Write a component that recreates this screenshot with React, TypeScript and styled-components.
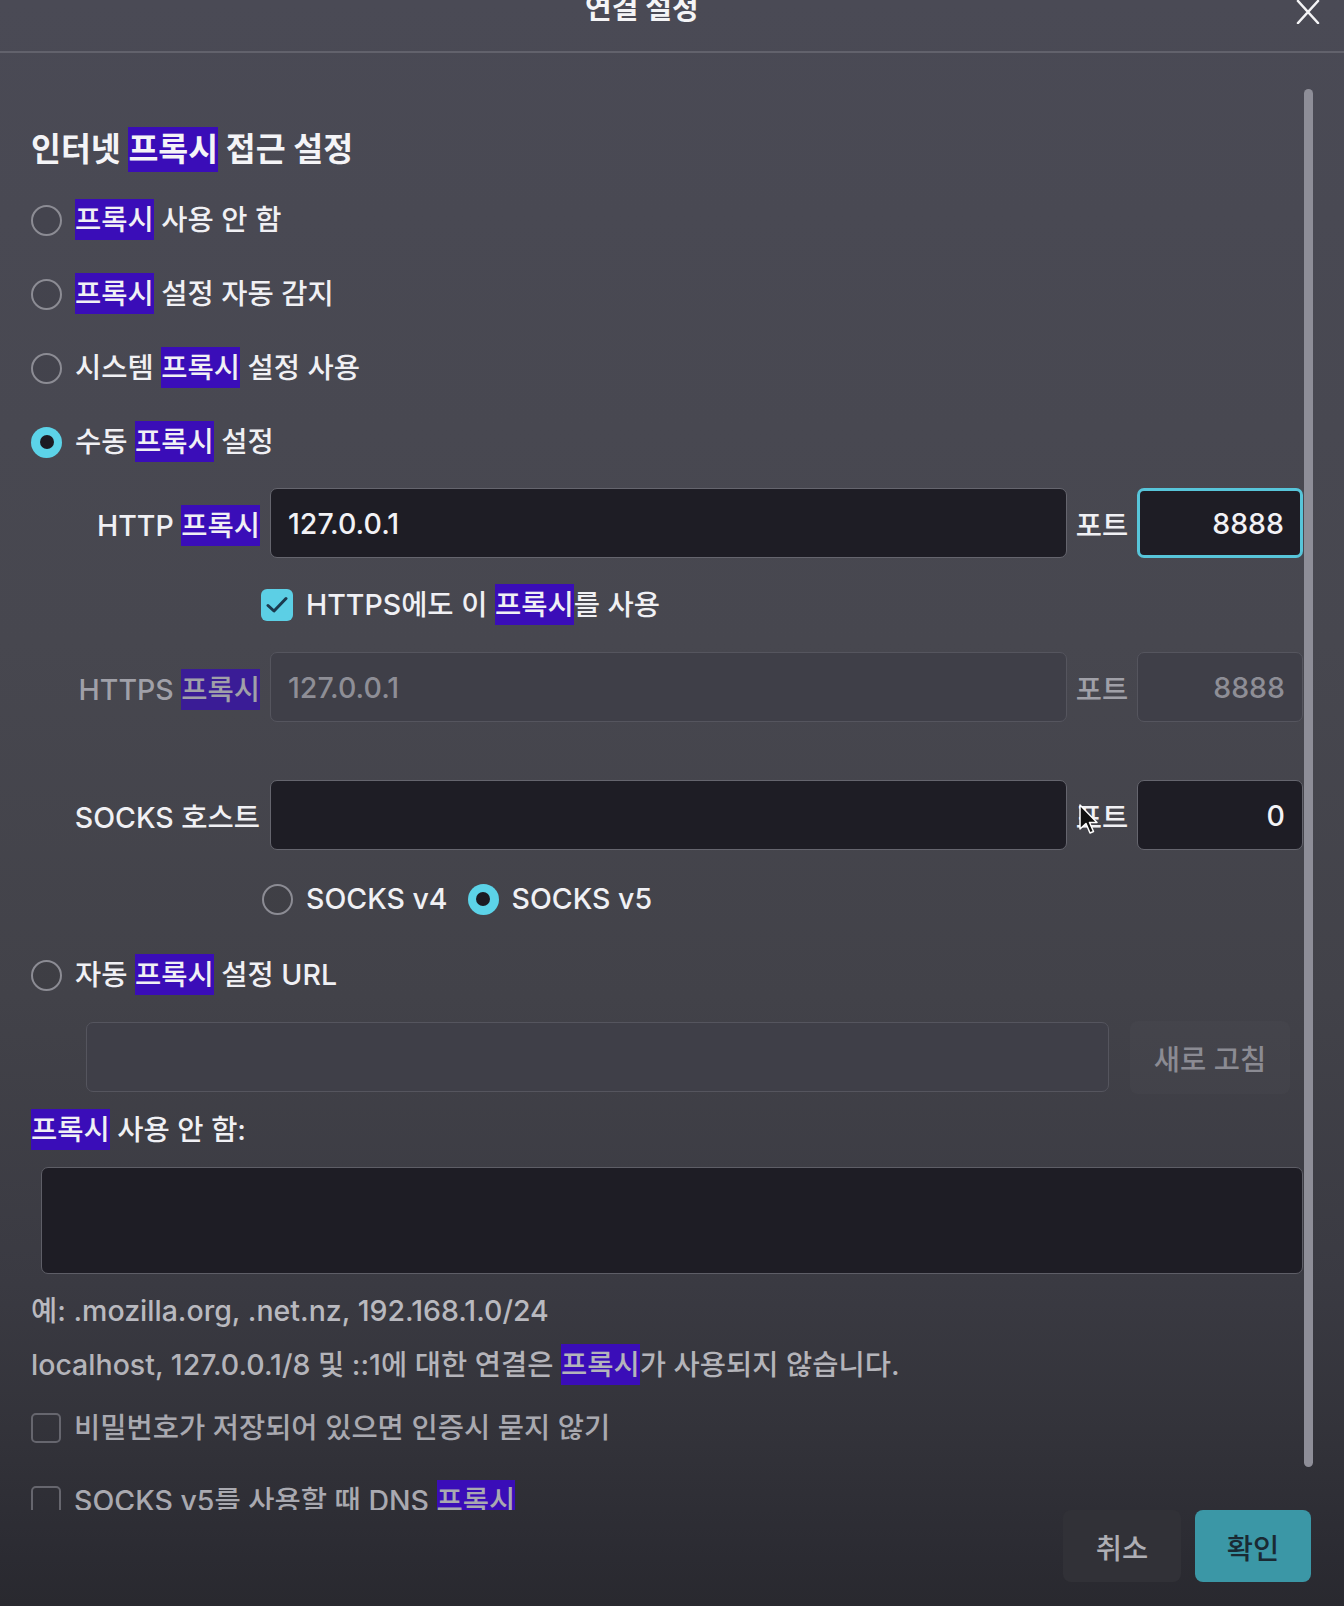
import React from 'react';
import styled, { createGlobalStyle, css } from 'styled-components';

const GlobalStyle = createGlobalStyle`
  html, body { margin: 0; padding: 0; background: #29292f; }
  body {
    font-family: Inter, "Noto Sans CJK KR", sans-serif;
    -webkit-font-smoothing: antialiased;
  }
  * { box-sizing: border-box; }
`;

const Dialog = styled.div`
  position: relative;
  width: 1344px;
  height: 1606px;
  display: flex;
  flex-direction: column;
  overflow: hidden;
  color: #f0f0f4;
  font-size: 28.5px;
  font-weight: 500;
  background: linear-gradient(
    180deg,
    #4a4a55 0%,
    #47474f 40%,
    #424249 62%,
    #3a3a42 80%,
    #33333a 89%,
    #2b2b32 97%,
    #29292f 100%
  );
`;

const Header = styled.header`
  flex: none;
  height: 53px;
  display: flex;
  align-items: flex-start;
  padding-right: 24px;
  border-bottom: 2px solid #62626c;
`;

const Title = styled.h1`
  margin: -6px 0 0 585px;
  font-size: 29px;
  line-height: 29px;
  font-weight: 700;
  color: #f4f4f6;
`;

const CloseButton = styled.button`
  margin-left: auto;
  width: 24px;
  height: 24px;
  padding: 0;
  border: 0;
  background: none;
  color: #f4f4f6;
  display: flex;
`;

const Body = styled.div`
  flex: 1;
  min-height: 0;
  display: flex;
`;

const Content = styled.div`
  flex: 1;
  min-width: 0;
  overflow: hidden;
  padding: 77px 0 0 31px;
`;

const ScrollTrack = styled.div`
  flex: none;
  width: 9px;
  margin: 0 31px 0 1px;
  padding: 36px 0 43px;
  display: flex;
`;

const ScrollThumb = styled.div`
  flex: 1;
  border-radius: 5px;
  background: #8e8e98;
`;

const Heading = styled.h2`
  margin: 0 0 28px;
  font-size: 32.5px;
  line-height: 40px;
  font-weight: 700;
  color: #f4f4f7;
`;

const Hl = styled.span<{ $muted?: boolean }>`
  background: ${(p) => (p.$muted ? '#3a1c96' : '#3a0db8')};
  padding: 3px 0;
`;

const RadioList = styled.div`
  display: flex;
  flex-direction: column;
  gap: 30px;
`;

const OptionRow = styled.label<{ $mt?: number; $indent?: number; $dim?: boolean }>`
  height: 44px;
  display: flex;
  align-items: center;
  gap: 13px;
  margin-top: ${(p) => p.$mt ?? 0}px;
  padding-left: ${(p) => p.$indent ?? 0}px;
  line-height: 44px;
  white-space: nowrap;
  color: ${(p) => (p.$dim ? '#a9a9b0' : 'inherit')};
`;

const Radio = styled.span<{ $checked?: boolean; $gapBefore?: number }>`
  flex: none;
  width: 31px;
  height: 31px;
  border-radius: 50%;
  display: flex;
  align-items: center;
  justify-content: center;
  margin-left: ${(p) => p.$gapBefore ?? 0}px;
  ${(p) =>
    p.$checked
      ? css`
          background: #5cd3e8;
          &::after {
            content: '';
            width: 14px;
            height: 14px;
            border-radius: 50%;
            background: #1c1b23;
          }
        `
      : css`
          border: 2px solid #8c8c94;
          background: rgba(0, 0, 0, 0.06);
        `}
`;

const Checkbox = styled.span<{ $checked?: boolean; $dim?: boolean }>`
  flex: none;
  width: 32px;
  height: 32px;
  border-radius: 6px;
  display: flex;
  align-items: center;
  justify-content: center;
  ${(p) =>
    p.$checked
      ? css`
          background: #5ccfe5;
        `
      : css`
          border: 2px solid ${p.$dim ? '#66666e' : '#8c8c94'};
          width: 30px;
          height: 30px;
          border-radius: 5px;
        `}
`;

const ProxyRow = styled.div<{ $mt: number }>`
  display: grid;
  grid-template-columns: 229px 1fr 50px 166px;
  column-gap: 10px;
  align-items: center;
  height: 70px;
  margin-top: ${(p) => p.$mt}px;
`;

const FieldLabel = styled.span<{ $disabled?: boolean }>`
  justify-self: end;
  white-space: nowrap;
  color: ${(p) => (p.$disabled ? '#a0a0a8' : '#f0f0f4')};
`;

const PortLabel = styled.span<{ $disabled?: boolean }>`
  justify-self: center;
  white-space: nowrap;
  color: ${(p) => (p.$disabled ? '#a0a0a8' : '#f0f0f4')};
`;

const Field = styled.input<{ $align?: 'left' | 'right'; $focused?: boolean }>`
  width: 100%;
  height: 70px;
  margin: 0;
  padding: 0 17px;
  border-radius: 7px;
  border: 1.5px solid #65656e;
  background: #1e1d25;
  color: #f2f2f5;
  font: inherit;
  text-align: ${(p) => (p.$align === 'right' ? 'right' : 'left')};
  outline: none;
  &:disabled {
    background: #3f3f48;
    border-color: #55555e;
    color: #8e8e96;
  }
  ${(p) =>
    p.$focused &&
    css`
      border: 3px solid #57c5da;
      padding-right: 16px;
    `}
`;

const UrlRow = styled.div`
  display: flex;
  align-items: center;
  gap: 21px;
  margin-top: 24px;
  padding-left: 55px;
  padding-right: 13px;
  height: 72px;
`;

const UrlField = styled(Field)`
  flex: 1;
  width: auto;
`;

const RefreshButton = styled.button`
  flex: none;
  width: 160px;
  height: 73px;
  border: 0;
  border-radius: 8px;
  background: rgba(255, 255, 255, 0.02);
  color: #8b8b93;
  font: inherit;
`;

const PlainLine = styled.div<{ $mt: number; $color?: string }>`
  height: 40px;
  line-height: 40px;
  margin-top: ${(p) => p.$mt}px;
  white-space: nowrap;
  color: ${(p) => p.$color ?? 'inherit'};
`;

const NoProxyArea = styled.textarea`
  display: block;
  width: calc(100% - 10px);
  height: 107px;
  margin: 17px 0 0 10px;
  border-radius: 7px;
  border: 1.5px solid #5e5e67;
  background: #1e1d25;
  color: #f2f2f5;
  font: inherit;
  resize: none;
  outline: none;
`;

const Footer = styled.footer`
  flex: none;
  height: 96px;
  display: flex;
  justify-content: flex-end;
  align-items: flex-start;
  gap: 14px;
  padding: 0 33px 24px 0;
`;

const FooterButton = styled.button<{ $primary?: boolean }>`
  height: 72px;
  padding: 0;
  border: 0;
  border-radius: 8px;
  font: inherit;
  font-weight: 500;
  ${(p) =>
    p.$primary
      ? css`
          width: 116px;
          background: #3b97a6;
          color: #1a2a33;
        `
      : css`
          width: 118px;
          background: #313137;
          color: #aeaeb4;
        `}
`;

const Cursor = styled.svg`
  position: absolute;
  left: 1079px;
  top: 804px;
  pointer-events: none;
`;

const CheckMark = () => (
  <svg width="22" height="18" viewBox="0 0 22 18" fill="none">
    <path d="M2 9.5 L8 15 L20 2.5" stroke="#1b3a4e" strokeWidth="3" strokeLinecap="round" strokeLinejoin="round" />
  </svg>
);

const P = ({ muted }: { muted?: boolean }) => <Hl $muted={muted}>프록시</Hl>;

export default function App() {
  return (
    <>
      <GlobalStyle />
      <Dialog lang="ko">
        <Header>
          <Title>연결 설정</Title>
          <CloseButton aria-label="닫기">
            <svg width="24" height="24" viewBox="0 0 24 24" fill="none">
              <path d="M2 1 L22 23 M22 1 L2 23" stroke="#f4f4f6" strokeWidth="2.6" strokeLinecap="round" />
            </svg>
          </CloseButton>
        </Header>

        <Body>
          <Content>
            <Heading>
              인터넷 <P /> 접근 설정
            </Heading>

            <RadioList>
              <OptionRow>
                <Radio />
                <span>
                  <P /> 사용 안 함
                </span>
              </OptionRow>
              <OptionRow>
                <Radio />
                <span>
                  <P /> 설정 자동 감지
                </span>
              </OptionRow>
              <OptionRow>
                <Radio />
                <span>
                  시스템 <P /> 설정 사용
                </span>
              </OptionRow>
              <OptionRow>
                <Radio $checked />
                <span>
                  수동 <P /> 설정
                </span>
              </OptionRow>
            </RadioList>

            <ProxyRow $mt={24}>
              <FieldLabel>
                HTTP <P />
              </FieldLabel>
              <Field defaultValue="127.0.0.1" />
              <PortLabel>포트</PortLabel>
              <Field $align="right" $focused defaultValue="8888" />
            </ProxyRow>

            <OptionRow $mt={25} $indent={230}>
              <Checkbox $checked>
                <CheckMark />
              </Checkbox>
              <span>
                HTTPS에도 이 <P />를 사용
              </span>
            </OptionRow>

            <ProxyRow $mt={25}>
              <FieldLabel $disabled>
                HTTPS <P muted />
              </FieldLabel>
              <Field disabled defaultValue="127.0.0.1" />
              <PortLabel $disabled>포트</PortLabel>
              <Field $align="right" disabled defaultValue="8888" />
            </ProxyRow>

            <ProxyRow $mt={58}>
              <FieldLabel>SOCKS 호스트</FieldLabel>
              <Field defaultValue="" />
              <PortLabel>포트</PortLabel>
              <Field $align="right" defaultValue="0" />
            </ProxyRow>

            <OptionRow $mt={27} $indent={231}>
              <Radio />
              <span>SOCKS v4</span>
              <Radio $checked $gapBefore={7} />
              <span>SOCKS v5</span>
            </OptionRow>

            <OptionRow $mt={32}>
              <Radio />
              <span>
                자동 <P /> 설정 URL
              </span>
            </OptionRow>

            <UrlRow>
              <UrlField disabled defaultValue="" />
              <RefreshButton disabled>새로 고침</RefreshButton>
            </UrlRow>

            <PlainLine $mt={17}>
              <P /> 사용 안 함:
            </PlainLine>

            <NoProxyArea defaultValue="" />

            <PlainLine $mt={17} $color="#b9b9bf">
              예: .mozilla.org, .net.nz, 192.168.1.0/24
            </PlainLine>
            <PlainLine $mt={14} $color="#b4b4ba">
              localhost, 127.0.0.1/8 및 ::1에 대한 연결은 <P />가 사용되지 않습니다.
            </PlainLine>

            <OptionRow $mt={21} $dim>
              <Checkbox $dim />
              <span>비밀번호가 저장되어 있으면 인증시 묻지 않기</span>
            </OptionRow>
            <OptionRow $mt={29} $dim>
              <Checkbox $dim />
              <span>
                SOCKS v5를 사용할 때 DNS <P />
              </span>
            </OptionRow>
          </Content>
          <ScrollTrack>
            <ScrollThumb />
          </ScrollTrack>
        </Body>

        <Footer>
          <FooterButton>취소</FooterButton>
          <FooterButton $primary>확인</FooterButton>
        </Footer>

        <Cursor width="20" height="32" viewBox="0 0 20 32">
          <path d="M1 1 L1 25 L7 19.5 L11 29 L14.5 27.5 L10.5 18.5 L18 18.5 Z" fill="#111" stroke="#fff" strokeWidth="1.5" strokeLinejoin="round" />
        </Cursor>
      </Dialog>
    </>
  );
}
